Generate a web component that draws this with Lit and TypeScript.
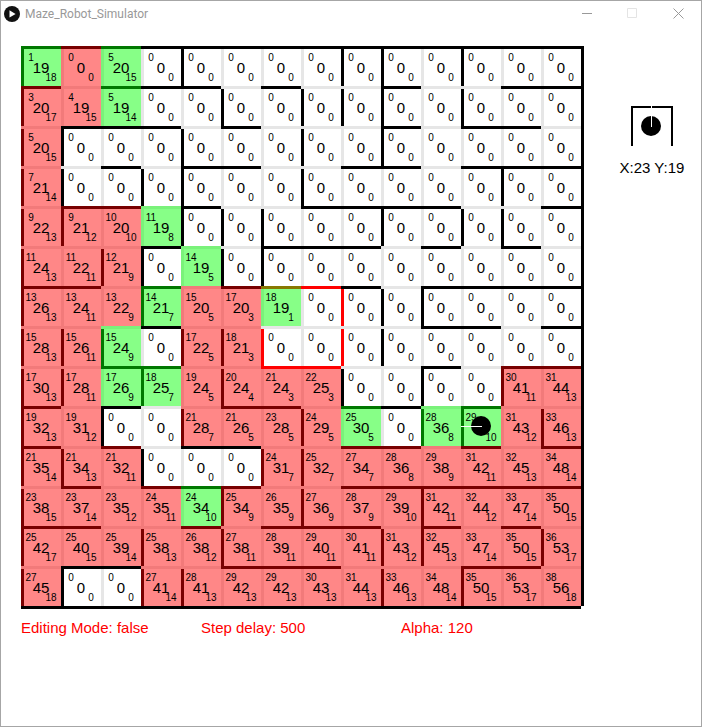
import { LitElement, html, css, svg, nothing } from "lit";
import { customElement, property } from "lit/decorators.js";
import { classMap } from "lit/directives/class-map.js";

// Walls per row: "#" solid, "R" highlighted, "." open.
const TOP_WALLS = [
  "##############",
  "#.###.#..#..##",
  ".###.#...#.##.",
  "..#.##..##.###",
  ".##.#..####..#",
  "...#..###.#.#.",
  "##.#.#RR#.####",
  "...#......##.#",
  "..##..RR..#.##",
  "#.#..##.##.#..",
  "#.#.##..##.#.#",
  ".#.###..######",
  "##..#.###.#.#.",
  ".##..###...##.",
];

const LEFT_WALLS = [
  "#...#...##.#..",
  "#....#.###.#..",
  "##..#..#.#....",
  "##.##..#....#.",
  "##..###..#.##.",
  "#.##.##.......",
  "#..#....R##...",
  "###.##R.R#....",
  "##.#.#..#.#.#.",
  "#.#.#..#..##.#",
  "##.#..##......",
  "#....#.#..#...",
  "#..#.#...##..#",
  "##.##....#.#..",
];

// Cells: tint letter (g = path, r = visited), then steps/total/distance. "-" is unvisited.
const CELLS = [
  "g1/19/18 r0/0/0 g5/20/15 - - - - - - - - - - -",
  "r3/20/17 r4/19/15 g5/19/14 - - - - - - - - - - -",
  "r5/20/15 - - - - - - - - - - - - -",
  "r7/21/14 - - - - - - - - - - - - -",
  "r9/22/13 r9/21/12 r10/20/10 g11/19/8 - - - - - - - - - -",
  "r11/24/13 r11/22/11 r12/21/9 - g14/19/5 - - - - - - - - -",
  "r13/26/13 r13/24/11 r13/22/9 g14/21/7 r15/20/5 r17/20/3 g18/19/1 - - - - - - -",
  "r15/28/13 r15/26/11 g15/24/9 - r17/22/5 r18/21/3 - - - - - - - -",
  "r17/30/13 r17/28/11 g17/26/9 g18/25/7 r19/24/5 r20/24/4 r21/24/3 r22/25/3 - - - - r30/41/11 r31/44/13",
  "r19/32/13 r19/31/12 - - r21/28/7 r21/26/5 r23/28/5 r24/29/5 g25/30/5 - g28/36/8 g29//10 r31/43/12 r33/46/13",
  "r21/35/14 r21/34/13 r21/32/11 - - - r24/31/7 r25/32/7 r27/34/7 r28/36/8 r29/38/9 r31/42/11 r32/45/13 r34/48/14",
  "r23/38/15 r23/37/14 r23/35/12 r24/35/11 g24/34/10 r25/34/9 r26/35/9 r27/36/9 r28/37/9 r29/39/10 r31/42/11 r32/44/12 r33/47/14 r35/50/15",
  "r25/42/17 r25/40/15 r25/39/14 r25/38/13 r26/38/12 r27/38/11 r28/39/11 r29/40/11 r30/41/11 r31/43/12 r32/45/13 r33/47/14 r35/50/15 r36/53/17",
  "r27/45/18 - - r27/41/14 r28/41/13 r29/42/13 r29/42/13 r30/43/13 r31/44/13 r33/46/13 r34/48/14 r35/50/15 r36/53/17 r38/56/18",
];

const ROBOT = { row: 9, col: 11 };

@customElement("maze-cell")
class MazeCell extends LitElement {
  @property() data = "-";
  @property() top = ".";
  @property() left = ".";
  @property({ type: Boolean }) robot = false;

  static styles = css`
    :host {
      display: block;
    }
    .cell {
      --top: #e6e6e6;
      --left: #e6e6e6;
      --tint: transparent;
      position: relative;
      box-sizing: border-box;
      height: 40px;
      padding-top: 7px;
      display: grid;
      grid-template-columns: 1fr 1fr;
      grid-template-rows: 10px 10px 10px;
      text-align: center;
      font-size: 10px;
      line-height: 10px;
      background:
        linear-gradient(var(--tint), var(--tint)),
        linear-gradient(var(--top), var(--top)) 0 0 / 100% 3px no-repeat,
        linear-gradient(var(--left), var(--left)) 0 0 / 3px 100% no-repeat,
        #fff;
    }
    .top-solid { --top: #000; }
    .top-marked { --top: #f00; }
    .left-solid { --left: #000; }
    .left-marked { --left: #f00; }
    .visited { --tint: rgba(255, 0, 0, 0.47); }
    .path { --tint: rgba(0, 255, 0, 0.47); }
    .steps { grid-area: 1 / 1; }
    .total {
      grid-area: 2 / 1 / 3 / 3;
      font-size: 15px;
    }
    .distance { grid-area: 3 / 2; }
    .robot {
      position: absolute;
      inset: 0;
      width: 40px;
      height: 40px;
    }
  `;

  render() {
    const blank = this.data === "-";
    const [steps, total, distance] = blank ? ["0", "0", "0"] : this.data.slice(1).split("/");
    const classes = {
      cell: true,
      visited: this.data[0] === "r",
      path: this.data[0] === "g",
      "top-solid": this.top === "#",
      "top-marked": this.top === "R",
      "left-solid": this.left === "#",
      "left-marked": this.left === "R",
    };
    return html`
      <div class=${classMap(classes)}>
        <span class="steps">${steps}</span>
        <span class="total">${total}</span>
        <span class="distance">${distance}</span>
        ${this.robot
          ? html`<svg class="robot" viewBox="0 0 40 40" aria-label="Robot">
              ${svg`<circle cx="20" cy="20" r="10"/><path d="M0 20.5H21" stroke="#fff"/>`}
            </svg>`
          : nothing}
      </div>
    `;
  }
}

@customElement("app-root")
class AppRoot extends LitElement {
  static styles = css`
    :host {
      display: block;
      font-family: "Liberation Sans", Arial, sans-serif;
      color: #000;
    }
    .window {
      box-sizing: border-box;
      min-height: 100vh;
      border: 1px solid #a6a6a6;
      background: #fff;
    }
    .titlebar {
      display: flex;
      align-items: center;
      height: 25px;
      padding-left: 3px;
    }
    .app-icon {
      width: 16px;
      height: 16px;
    }
    .title {
      flex: 1;
      margin: 0 0 0 5px;
      font: 400 12px/24px Roboto, "Noto Sans", sans-serif;
      color: #999;
    }
    .control {
      display: grid;
      place-items: center;
      width: 46px;
      height: 24px;
      padding: 0;
      border: 0;
      background: none;
      color: #999;
    }
    .control:disabled { color: #e4e4e4; }
    .control svg {
      width: 11px;
      height: 11px;
      fill: none;
      stroke: currentColor;
    }
    .stage {
      display: flex;
      align-items: flex-start;
      gap: 19px;
      padding: 20px 0 0 20px;
    }
    .maze {
      flex: none;
      display: grid;
      grid-template-columns: repeat(14, 40px);
      padding: 0 3px 3px 0;
      background:
        linear-gradient(#000, #000) 100% 0 / 3px calc(100% - 3px) no-repeat,
        linear-gradient(#000, #000) 0 100% / calc(100% - 3px) 3px no-repeat;
    }
    .sensor {
      flex: 1;
      display: flex;
      flex-direction: column;
      align-items: center;
      gap: 12px;
      padding-top: 60px;
      font-size: 15px;
      line-height: 20px;
      white-space: nowrap;
    }
    .view {
      width: 42px;
      height: 40px;
    }
    .status {
      display: grid;
      grid-template-columns: 180px 200px auto;
      padding: 9px 0 0 20px;
      font-size: 15px;
      line-height: 20px;
      color: #f00;
    }
  `;

  render() {
    return html`
      <div class="window">
        <header class="titlebar">
          <svg class="app-icon" viewBox="0 0 16 16" aria-hidden="true">
            <circle cx="8" cy="8" r="8" fill="#111" />
            <path d="M5.5 4.3 11.6 8 5.5 11.5Z" fill="#fff" />
          </svg>
          <h1 class="title">Maze_Robot_Simulator</h1>
          <button class="control" aria-label="Minimize">
            <svg viewBox="0 0 11 11"><path d="M1 5.5H11" /></svg>
          </button>
          <button class="control" aria-label="Maximize" disabled>
            <svg viewBox="0 0 11 11"><path d="M.5 .5H9.5V9.5H.5Z" /></svg>
          </button>
          <button class="control" aria-label="Close">
            <svg viewBox="0 0 11 11"><path d="M.5 .5 10.5 10.5M10.5 .5 .5 10.5" /></svg>
          </button>
        </header>
        <main>
          <div class="stage">
            <div class="maze">
              ${CELLS.map((row, r) =>
                row.split(" ").map(
                  (data, c) => html`<maze-cell
                    .data=${data}
                    .top=${TOP_WALLS[r][c]}
                    .left=${LEFT_WALLS[r][c]}
                    .robot=${r === ROBOT.row && c === ROBOT.col}
                  ></maze-cell>`
                )
              )}
            </div>
            <aside class="sensor">
              <svg class="view" viewBox="0 0 42 40" aria-label="Walls around the robot">
                <path d="M1 40V1H41V40" fill="none" stroke="#000" stroke-width="2" />
                <circle cx="20" cy="20" r="10" />
                <path d="M20.5 0V21" stroke="#fff" />
              </svg>
              <span>X:23 Y:19</span>
            </aside>
          </div>
          <div class="status">
            <span>Editing Mode: false</span>
            <span>Step delay: 500</span>
            <span>Alpha: 120</span>
          </div>
        </main>
      </div>
    `;
  }
}
